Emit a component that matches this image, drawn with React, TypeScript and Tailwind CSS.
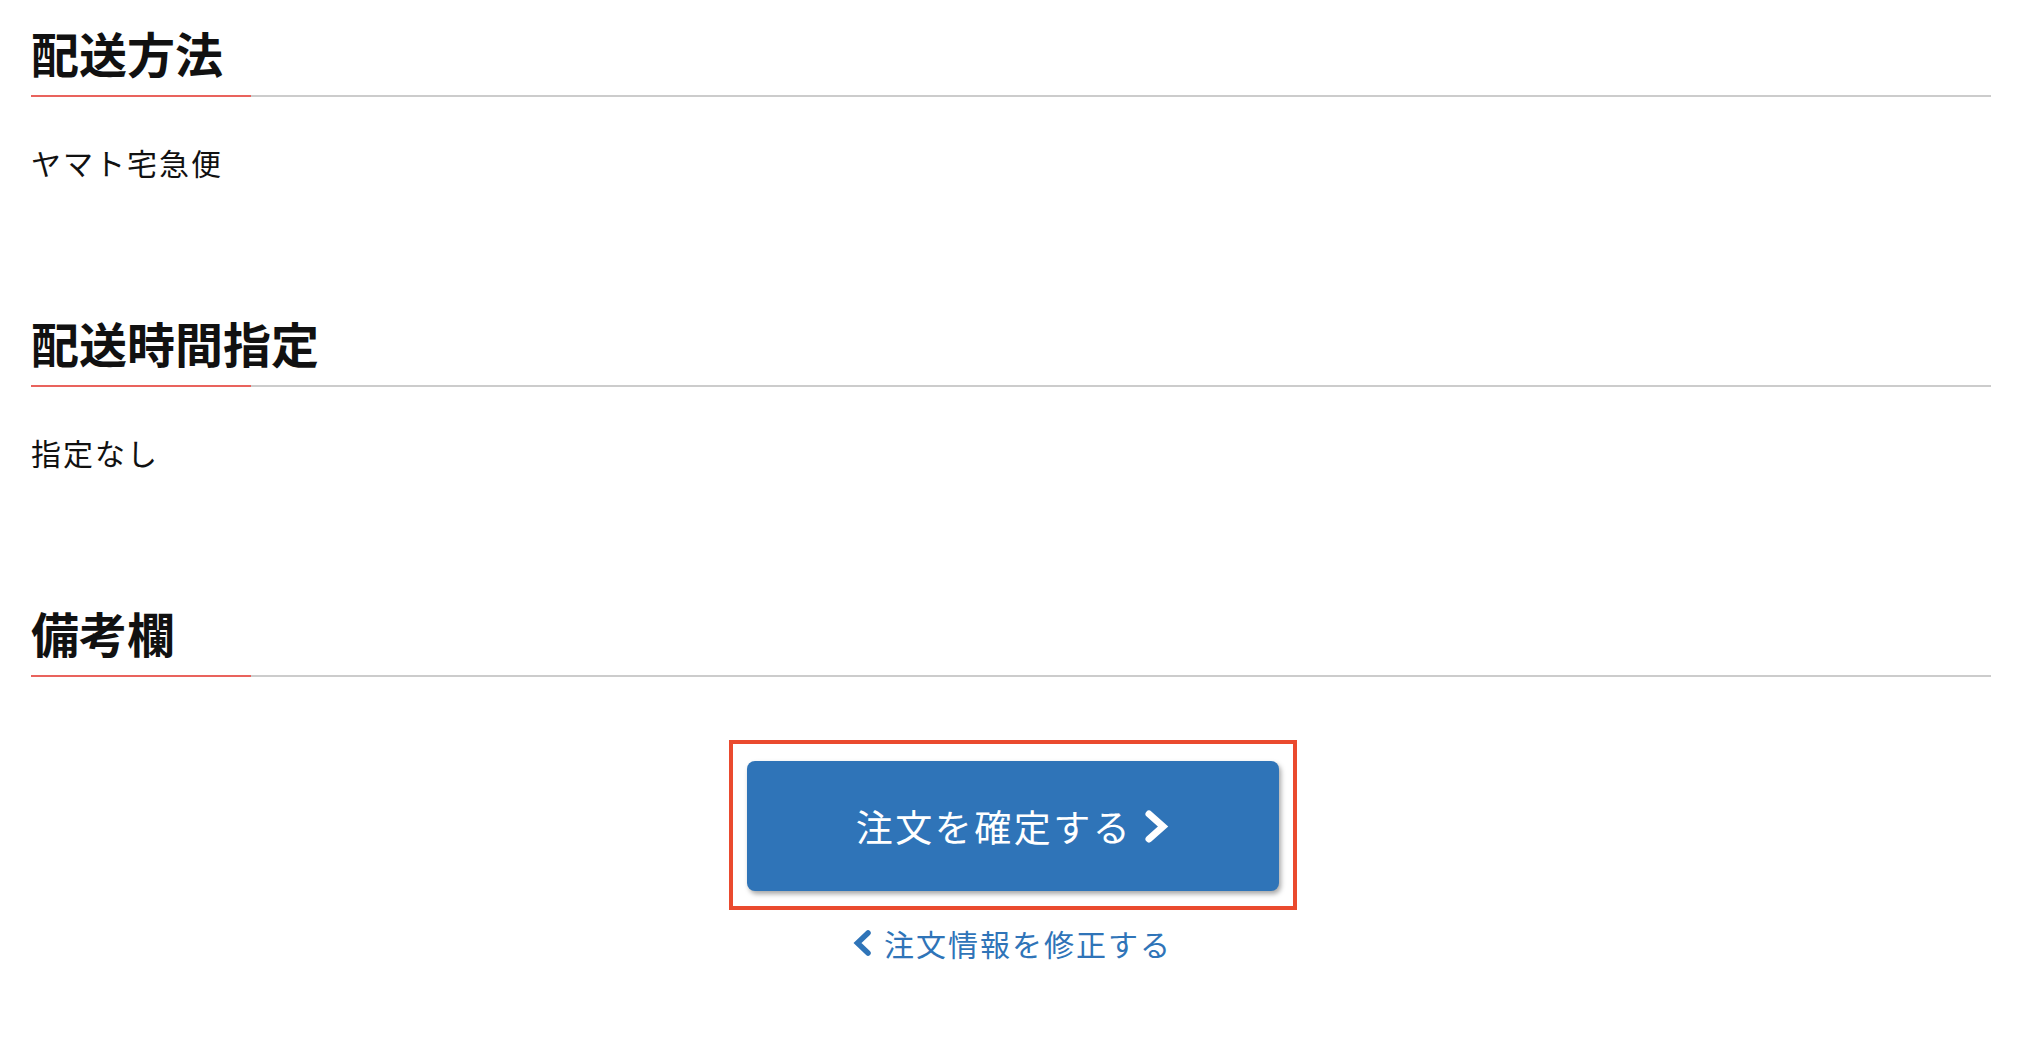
import React from "react";

// order confirmation – shipping summary + submit
const sections = [
  { title: "配送方法", body: "ヤマト宅急便" },
  { title: "配送時間指定", body: "指定なし" },
  { title: "備考欄", body: "" },
];

const font = "font-['Noto_Sans_CJK_JP','Noto_Sans',sans-serif]";

function SectionHeading({ title }: { title: string }) {
  return (
    <div>
      <h2 className="pb-[19px] text-[48px] font-bold leading-[48px] text-[#111]">{title}</h2>
      <div className="flex h-[2px]">
        <div className="w-[220px] bg-[#e9635d]" />
        <div className="flex-1 bg-[#cccccc]" />
      </div>
    </div>
  );
}

function ChevronRight() {
  return (
    <svg width="25" height="35" viewBox="0 0 25 35" aria-hidden="true">
      <polyline
        points="5,5 19,17.5 5,30"
        fill="none"
        stroke="currentColor"
        strokeWidth="7"
        strokeLinecap="round"
        strokeLinejoin="miter"
      />
    </svg>
  );
}

function ChevronLeft() {
  return (
    <svg width="19" height="28" viewBox="0 0 19 28" aria-hidden="true">
      <polyline
        points="15,4 4.5,14 15,24"
        fill="none"
        stroke="currentColor"
        strokeWidth="5.5"
        strokeLinecap="round"
        strokeLinejoin="miter"
      />
    </svg>
  );
}

export default function App() {
  return (
    <div className={`min-h-screen w-full bg-white ${font}`}>
      <div className="ml-[31px] mr-[42px] pt-[28px]">
        {sections.map((s, i) => (
          <section key={s.title} className={i === 0 ? "" : "mt-[141px]"}>
            <SectionHeading title={s.title} />
            {s.body && (
              <p className="mt-[50px] text-[30px] leading-[30px] tracking-[2px] text-[#111]">{s.body}</p>
            )}
          </section>
        ))}

        {/* submit area */}
        <div className="mt-[63px] flex flex-col items-center pl-[3px]">
          <div className="border-4 border-[#ea4a2e] px-[14px] pt-[17px] pb-[15px]">
            <button
              type="button"
              className="flex h-[130px] w-[532px] items-center justify-center gap-[12px] rounded-lg bg-[#2f74b8] text-white shadow-[2px_3px_5px_rgba(0,0,0,0.35)]"
            >
              <span className="text-[37px] leading-[37px] tracking-[2.5px]">注文を確定する</span>
              <ChevronRight />
            </button>
          </div>
          <a href="#" className="mt-[18px] flex items-center gap-[12px] text-[#2f74b8]">
            <ChevronLeft />
            <span className="text-[30px] leading-[30px] tracking-[2px]">注文情報を修正する</span>
          </a>
        </div>
      </div>
    </div>
  );
}
